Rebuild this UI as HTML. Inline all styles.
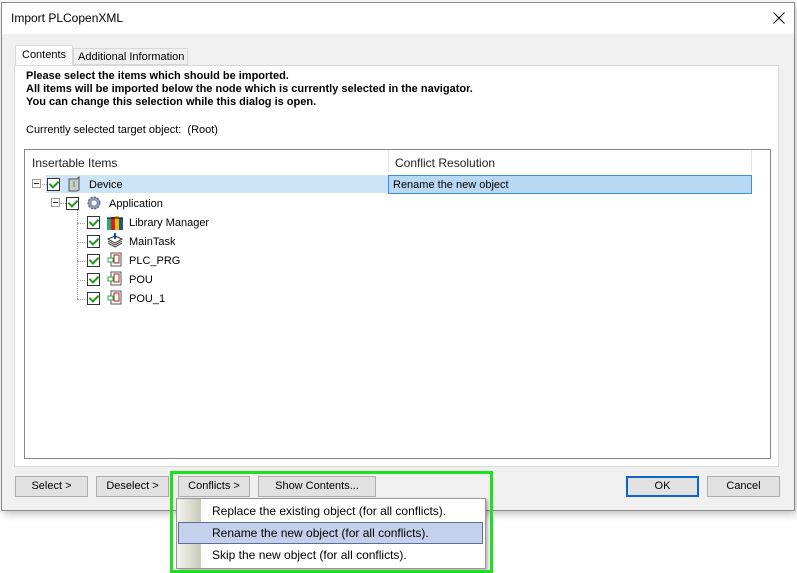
<!DOCTYPE html>
<html><head><meta charset="utf-8"><style>
*{box-sizing:border-box;margin:0;padding:0}
body{width:797px;height:573px;background:#fff;position:relative;overflow:hidden;font-family:"Liberation Sans",sans-serif;font-size:11px;color:#000}
.abs{position:absolute}
.dlg{left:1px;top:2px;width:794px;height:509px;border:1px solid #888;background:#f0f0f0;box-shadow:2px 3px 8px rgba(0,0,0,.25)}
.title{left:0;top:0;width:792px;height:31px;background:#fff}
.btn{position:absolute;height:21px;background:#e1e1e1;border:1px solid #adadad;text-align:center;line-height:19px;font-size:11px}
.cb{position:absolute;width:13px;height:13px;border:1px solid #333;background:#fff}
.cb:after{content:"";position:absolute;left:3px;top:0px;width:4px;height:7px;border:solid #1d9a1d;border-width:0 2px 2px 0;transform:rotate(45deg)}
.pm{position:absolute;width:9px;height:9px;border:1px solid #999;background:#fff}
.pm:after{content:"";position:absolute;left:1px;top:3px;width:5px;height:1px;background:#333}
.lbl{position:absolute;font-size:11px}
.dot{position:absolute;border-color:#a0a0a0;border-style:dotted;border-width:0}
</style></head><body>
<div class="abs dlg">
 <div class="abs title"></div>
 <div class="abs" style="left:9px;top:8px;font-size:12px">Import PLCopenXML</div>
 <svg class="abs" style="left:771px;top:9px" width="12" height="12"><path d="M0.5 0.5L11.5 11.5M11.5 0.5L0.5 11.5" stroke="#000" stroke-width="1"/></svg>
</div>
<!-- tabs -->
<div class="abs" style="left:15px;top:45px;width:58px;height:21px;background:#fff;border:1px solid #d9d9d9;border-bottom:none;padding:3px 0 0 6px">Contents</div>
<div class="abs" style="left:73px;top:48px;width:115px;height:17px;background:#f0f0f0;border:1px solid #d9d9d9;padding:2px 0 0 4px">Additional Information</div>
<div class="abs" style="left:14px;top:65px;width:765px;height:402px;background:#fff;border:1px solid #d9d9d9"></div>
<div class="abs" style="left:26px;top:70px;font-weight:bold;line-height:13px">Please select the items which should be imported.<br>All items will be imported below the node which is currently selected in the navigator.<br>You can change this selection while this dialog is open.</div>
<div class="abs" style="left:26px;top:124px">Currently selected target object:&nbsp; (Root)</div>
<!-- tree box -->
<div class="abs" style="left:24px;top:149px;width:747px;height:310px;border:1px solid #828790;background:#fff"></div>
<div class="abs" style="left:388px;top:150px;width:1px;height:22px;background:#e5e5e5"></div>
<div class="abs" style="left:751px;top:150px;width:1px;height:22px;background:#e5e5e5"></div>
<div class="lbl" style="left:32px;top:156px;font-size:12px;color:#222">Insertable Items</div>
<div class="lbl" style="left:395px;top:156px;font-size:12px;color:#222">Conflict Resolution</div>
<div class="abs" style="left:46px;top:175px;width:342px;height:18px;background:#cce4f7"></div>
<div class="abs" style="left:388px;top:175px;width:364px;height:19px;background:#b9d8f3;border:1px solid #3d8ed6"></div>
<div class="lbl" style="left:393px;top:179px">Rename the new object</div>
<!-- tree lines -->
<div class="dot" style="left:42px;top:184px;width:5px;border-top-width:1px"></div>
<div class="dot" style="left:60px;top:203px;width:6px;border-top-width:1px"></div>
<div class="dot" style="left:77px;top:208px;height:91px;border-left-width:1px"></div>
<div class="dot" style="left:77px;top:223px;width:8px;border-top-width:1px"></div>
<div class="dot" style="left:77px;top:242px;width:8px;border-top-width:1px"></div>
<div class="dot" style="left:77px;top:261px;width:8px;border-top-width:1px"></div>
<div class="dot" style="left:77px;top:280px;width:8px;border-top-width:1px"></div>
<div class="dot" style="left:77px;top:299px;width:8px;border-top-width:1px"></div>
<div class="pm" style="left:32px;top:179px"></div>
<div class="pm" style="left:51px;top:198px"></div>
<div class="cb" style="left:47px;top:178px"></div>
<div class="cb" style="left:66px;top:197px"></div>
<div class="cb" style="left:87px;top:216px"></div>
<div class="cb" style="left:87px;top:235px"></div>
<div class="cb" style="left:87px;top:254px"></div>
<div class="cb" style="left:87px;top:273px"></div>
<div class="cb" style="left:87px;top:292px"></div>
<!-- icons -->
<svg class="abs" style="left:66px;top:176px" width="16" height="16"><path d="M3 3h8l2-2v13l-2 1H3z" fill="#ccc" stroke="#555"/><path d="M8 5v6" stroke="#2a2"/></svg>
<svg class="abs" style="left:86px;top:195px" width="16" height="16"><circle cx="8" cy="8" r="6" fill="#8a9ab5" stroke="#556" stroke-dasharray="2 1.5"/><circle cx="8" cy="8" r="2.5" fill="#fff"/></svg>
<svg class="abs" style="left:106px;top:214px" width="18" height="17"><rect x="1" y="4" width="4" height="12" fill="#2a7"/><rect x="5" y="3" width="4" height="13" fill="#c22"/><rect x="9" y="2" width="4" height="14" fill="#e8c000"/><rect x="13" y="4" width="4" height="12" fill="#258"/><path d="M1 4h16" stroke="#000"/></svg>
<svg class="abs" style="left:107px;top:233px" width="16" height="16"><path d="M1 10l7 4 7-4M1 8l7 4 7-4M1 6l7-3 7 3-7 4z" fill="#fff" stroke="#333"/><path d="M8 0v6" stroke="#14c" stroke-width="2"/></svg>
<svg class="abs" style="left:107px;top:252px" width="16" height="16"><rect x="4" y="1" width="10" height="13" fill="#fff" stroke="#555"/><rect x="7" y="3" width="5" height="8" fill="none" stroke="#a22"/><rect x="1" y="6" width="5" height="4" fill="#fff" stroke="#2a4"/></svg>
<svg class="abs" style="left:107px;top:271px" width="16" height="16"><rect x="4" y="1" width="10" height="13" fill="#fff" stroke="#555"/><rect x="7" y="3" width="5" height="8" fill="none" stroke="#a22"/><rect x="1" y="6" width="5" height="4" fill="#fff" stroke="#2a4"/></svg>
<svg class="abs" style="left:107px;top:290px" width="16" height="16"><rect x="4" y="1" width="10" height="13" fill="#fff" stroke="#555"/><rect x="7" y="3" width="5" height="8" fill="none" stroke="#a22"/><rect x="1" y="6" width="5" height="4" fill="#fff" stroke="#2a4"/></svg>
<div class="lbl" style="left:89px;top:179px">Device</div>
<div class="lbl" style="left:109px;top:198px">Application</div>
<div class="lbl" style="left:129px;top:217px">Library Manager</div>
<div class="lbl" style="left:129px;top:236px">MainTask</div>
<div class="lbl" style="left:129px;top:255px">PLC_PRG</div>
<div class="lbl" style="left:129px;top:274px">POU</div>
<div class="lbl" style="left:129px;top:293px">POU_1</div>
<!-- buttons -->
<div class="btn" style="left:15px;top:476px;width:73px">Select &gt;</div>
<div class="btn" style="left:96px;top:476px;width:73px">Deselect &gt;</div>
<div class="btn" style="left:178px;top:476px;width:72px">Conflicts &gt;</div>
<div class="btn" style="left:258px;top:476px;width:118px">Show Contents...</div>
<div class="btn" style="left:626px;top:476px;width:73px;border:2px solid #0a66c8;line-height:17px">OK</div>
<div class="btn" style="left:707px;top:476px;width:73px">Cancel</div>
<!-- menu -->
<div class="abs" style="left:176px;top:498px;width:310px;height:71px;background:#fff;border:1px solid #979797;box-shadow:2px 2px 3px rgba(0,0,0,.3)"></div>
<div class="abs" style="left:177px;top:499px;width:24px;height:69px;background:linear-gradient(90deg,#f4f4ee,#c9c9b8)"></div>
<div class="abs" style="left:178px;top:522px;width:305px;height:22px;background:#c5d1ec;border:1px solid #5a6e98"></div>
<div class="lbl" style="left:212px;top:504px;font-size:12px">Replace the existing object (for all conflicts).</div>
<div class="lbl" style="left:212px;top:526px;font-size:12px">Rename the new object (for all conflicts).</div>
<div class="lbl" style="left:212px;top:548px;font-size:12px">Skip the new object (for all conflicts).</div>
<div class="abs" style="left:170px;top:471px;width:323px;height:102px;border:3px solid #1fe01f"></div>
</body></html>
